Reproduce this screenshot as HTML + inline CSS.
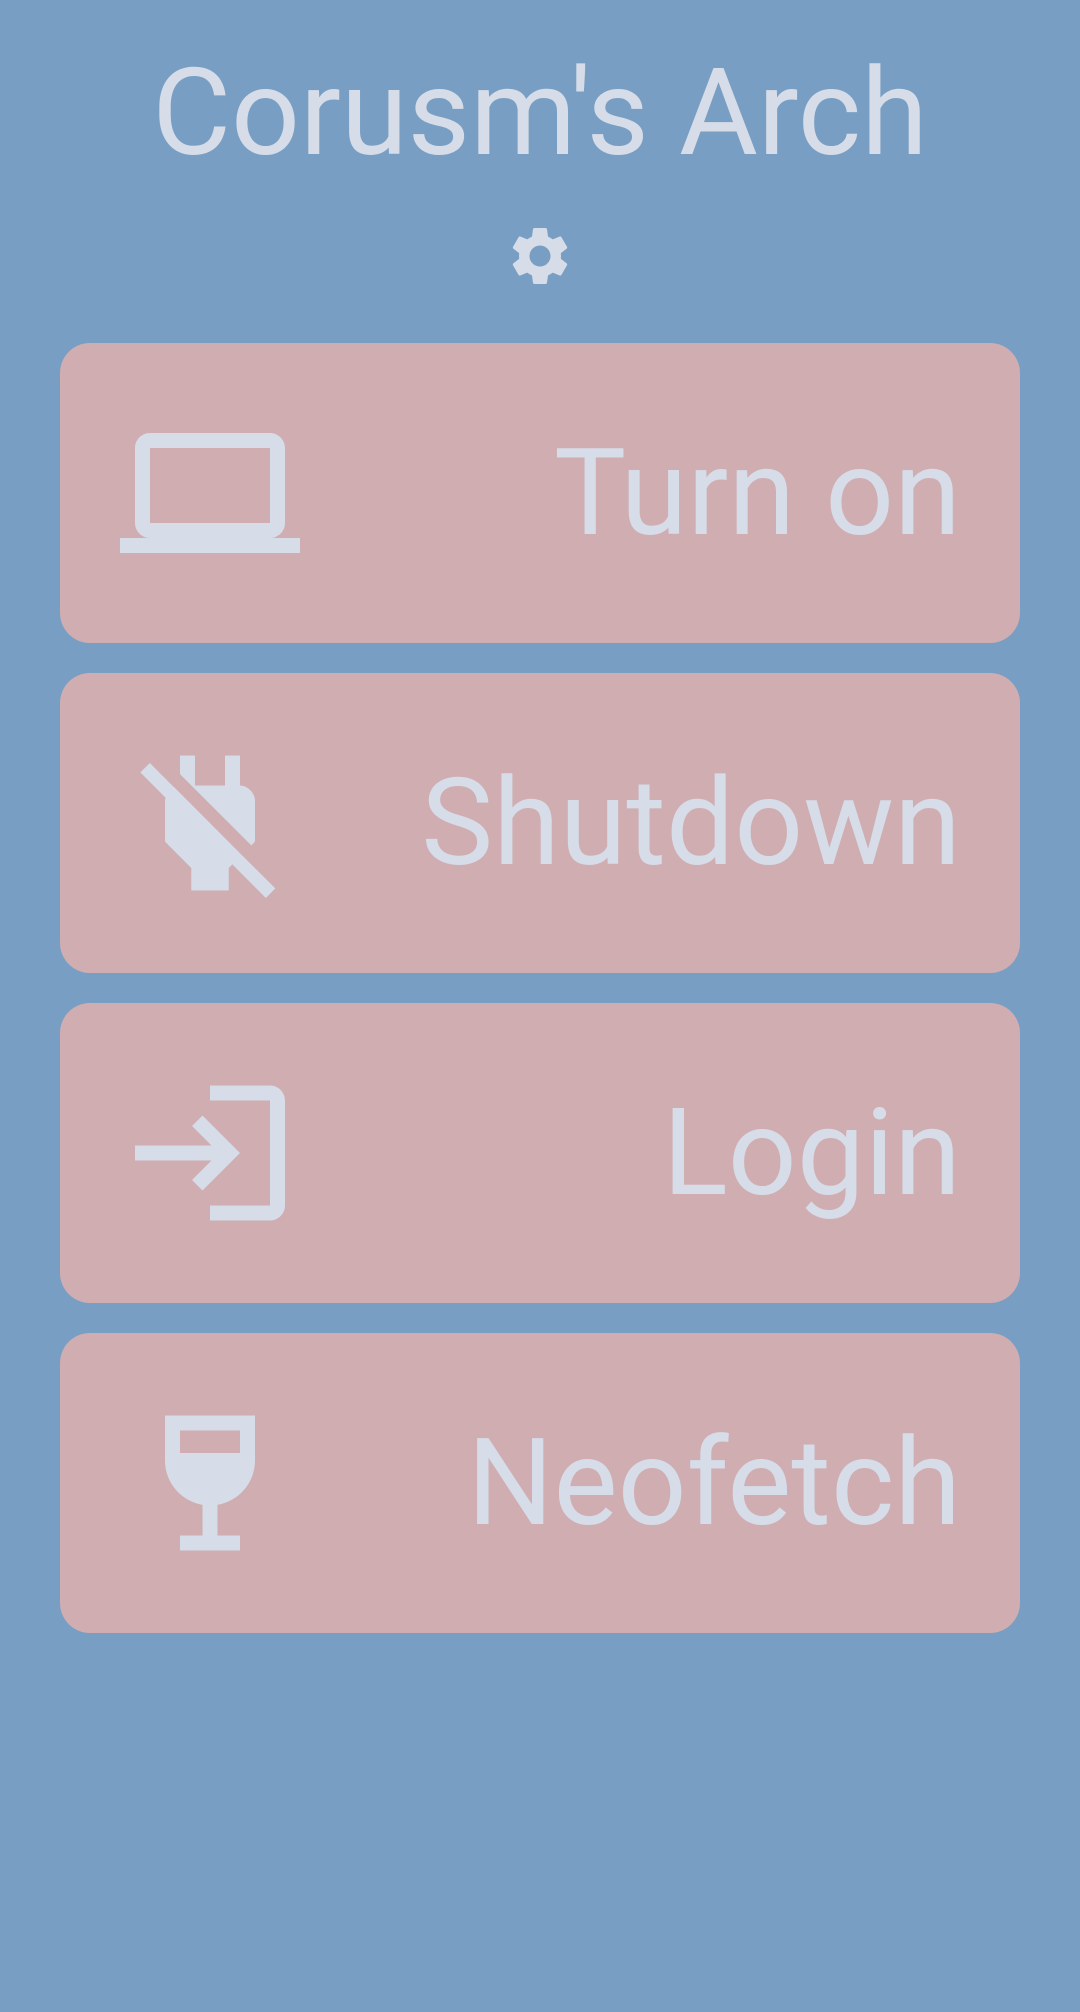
<!DOCTYPE html>
<html><head><meta charset="utf-8"><style>
html,body{margin:0;padding:0;}
body{width:1080px;height:2012px;background:#789fc3;position:relative;overflow:hidden;font-family:"Roboto","Liberation Sans",sans-serif;color:#d6dce8;}
.title{position:absolute;left:0;width:1080px;top:53px;text-align:center;font-size:121px;line-height:121px;}
.gear{position:absolute;left:505px;top:221px;width:70px;height:70px;}
.card{position:absolute;left:60px;width:960px;height:300px;background:#cfadb1;border-radius:30px;}
.card svg{position:absolute;left:60px;top:60px;width:180px;height:180px;}
.card .t{position:absolute;right:59px;top:90px;font-size:121px;line-height:121px;white-space:nowrap;}
</style></head><body>
<div class="title">Corusm's Arch</div>
<svg class="gear" viewBox="0 0 24 24"><path fill="#d6dce8" d="M19.14 12.94c.04-.3.06-.61.06-.94 0-.32-.02-.64-.07-.94l2.030-1.58c.18-.14.23-.41.12-.61l-1.92-3.32c-.12-.22-.37-.29-.59-.22l-2.39.96c-.5-.38-1.03-.7-1.620-.94l-.36-2.54c-.04-.24-.24-.41-.48-.41h-3.84c-.24 0-.43.17-.47.41l-.36 2.54c-.59.24-1.13.57-1.62.94l-2.39-.96c-.22-.08-.47 0-.59.22L2.74 8.87c-.12.21-.08.47.12.61l2.03 1.58c-.05.3-.09.63-.09.94s.02.64.07.94l-2.03 1.58c-.18.14-.23.41-.12.61l1.92 3.32c.12.22.37.29.59.22l2.39-.96c.5.38 1.03.7 1.62.94l.36 2.54c.05.24.24.41.48.41h3.84c.24 0 .44-.17.47-.41l.36-2.54c.59-.24 1.13-.56 1.62-.94l2.39.96c.22.08.47 0 .59-.22l1.92-3.32c.12-.22.07-.47-.12-.61l-2.01-1.58zM12 15.6c-1.98 0-3.6-1.62-3.6-3.6s1.62-3.6 3.6-3.6 3.6 1.62 3.6 3.6-1.62 3.6-3.6 3.6z"/></svg>

<div class="card" style="top:343px">
<svg viewBox="0 0 24 24"><path fill="#d6dce8" d="M20 18c1.1 0 2-.9 2-2V6c0-1.1-.9-2-2-2H4c-1.1 0-2 .9-2 2v10c0 1.1.9 2 2 2H0v2h24v-2h-4zM4 6h16v10H4V6z"/></svg>
<div class="t">Turn on</div></div>

<div class="card" style="top:673px">
<svg viewBox="0 0 24 24"><path fill="#d6dce8" d="M18 14.49V9c0-1-1.01-2.01-2-2V3h-2v4h-4V3H8v2.48l9.51 9.5.49-.49zm-1.76 1.77L7.2 7.2l-.01.01L3.98 4 2.71 5.250l3.36 3.36C6.04 8.74 6 8.87 6 9v5.48L9.5 18v3h5v-3l.48-.48L19.45 22l1.26-1.280-4.47-4.46z"/></svg>
<div class="t">Shutdown</div></div>

<div class="card" style="top:1003px">
<svg viewBox="0 0 24 24"><path fill="#d6dce8" d="M11 7L9.6 8.4l2.6 2.6H2v2h10.2l-2.6 2.6L11 17l5-5-5-5zm9 12h-8v2h8c1.1 0 2-.9 2-2V5c0-1.1-.9-2-2-2h-8v2h8v14z"/></svg>
<div class="t">Login</div></div>

<div class="card" style="top:1333px">
<svg viewBox="0 0 24 24"><path fill="#d6dce8" d="M6 3v6c0 2.970 2.16 5.43 5 5.91V19H8v2h8v-2h-3v-4.09c2.84-.48 5-2.94 5-5.91V3H6zm10 5H8V5h8v3z"/></svg>
<div class="t">Neofetch</div></div>
</body></html>
